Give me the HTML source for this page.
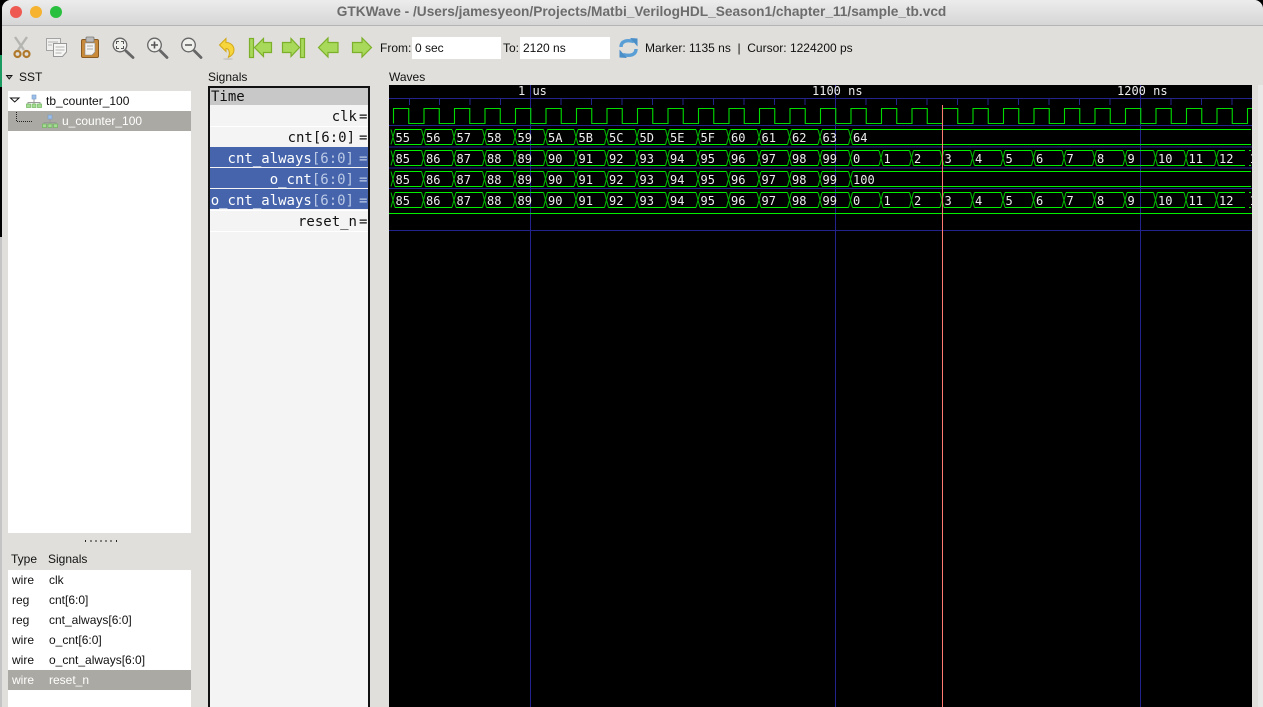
<!DOCTYPE html>
<html><head><meta charset="utf-8"><title>GTKWave</title>
<style>
html,body{margin:0;padding:0;background:#000;width:1263px;height:707px;overflow:hidden;}
body{position:relative;font-family:"Liberation Sans",sans-serif;}
#win{position:absolute;left:2px;top:0;width:1261px;height:707px;background:#e0dfdb;border-radius:9px 9px 0 0;overflow:hidden;}
.a{position:absolute;white-space:pre;}
.t{font-size:12px;line-height:14px;color:#111;}
.m{font-family:"DejaVu Sans Mono",monospace;font-size:14px;line-height:18px;color:#111;text-align:right;}
.e{left:359px;}
.s{color:#fff;}.s i{font-style:normal;color:#bccae6;}
.r{position:absolute;left:210px;width:158px;}
text{font-family:"DejaVu Sans Mono",monospace;font-size:12px;fill:#eee;}
</style></head><body>
<div class="a" style="left:0;top:55px;width:2px;height:32px;background:#1a9a60"></div>
<div class="a" style="left:0;top:237px;width:2px;height:470px;background:#c4c4c4"></div>
<div id="win"></div>
<div class="a" style="left:2px;top:0;width:1261px;height:25px;background:linear-gradient(#ececec,#d6d6d6);border-bottom:1px solid #b4b4b4;border-radius:9px 9px 0 0"></div>
<div class="a" style="left:10px;top:6px;width:12px;height:12px;border-radius:50%;background:#ee5a52"></div>
<div class="a" style="left:30px;top:6px;width:12px;height:12px;border-radius:50%;background:#f5b32f"></div>
<div class="a" style="left:50px;top:6px;width:12px;height:12px;border-radius:50%;background:#2ac03f"></div>
<div class="a" style="left:0;width:1283px;top:4px;text-align:center;font-size:13.7px;line-height:16px;font-weight:bold;color:#6c6c6c">GTKWave - /Users/jamesyeon/Projects/Matbi_VerilogHDL_Season1/chapter_11/sample_tb.vcd</div>

<svg class="a" style="left:0;top:30px" width="640" height="34" viewBox="0 30 640 34">
<!-- scissors -->
<g fill="none">
<path d="M15 37L24 50M27 37L18 50" stroke="#b4b4b0" stroke-width="2.400"/>
<circle cx="17.500" cy="54" r="3" stroke="#b0782a" stroke-width="2.200"/><circle cx="26.500" cy="54" r="3" stroke="#b0782a" stroke-width="2.200"/>
</g>
<!-- copy -->
<path d="M46.500 38.500H60.500V50.500H46.500Z" fill="#f0f0ee" stroke="#a4a4a4"/>
<path d="M53.500 43.500H66.500V52L62.500 56.500H53.500Z" fill="#f6f6f4" stroke="#989898"/>
<path d="M48 42h10M48 45h4M55.500 47h9M55.500 50h9M55.500 53h6" stroke="#b4b4b4"/>
<!-- paste -->
<rect x="81.500" y="39.500" width="17" height="18" rx="1.500" fill="#c98a3a" stroke="#8a5a20"/>
<path d="M85 43H95V52L92 55H85Z" fill="#f2f2f0" stroke="#888" stroke-width=".6"/>
<rect x="86" y="37" width="8" height="5" rx="1" fill="#bbb" stroke="#777" stroke-width=".8"/>
<path d="M87 46h6M87 49h6" stroke="#aaa"/>
<!-- zooms -->
<g fill="#efefec" stroke="#666" stroke-width="1.300">
<circle cx="120" cy="45" r="6.800"/><circle cx="154.500" cy="45" r="6.800"/><circle cx="188.500" cy="45" r="6.800"/></g>
<g stroke="#666" stroke-width="2.800" stroke-linecap="round">
<path d="M126 51L133 57.500M160.500 51L167 57.500M194.500 51L201 57.500"/></g>
<path d="M116.500 44v-2.500h2.500M121 41.500h2.500v2.500M123.500 46v2.500h-2.500M119 48.500h-2.500v-2.500" fill="none" stroke="#555"/>
<path d="M151 45h7M154.500 41.500v7M185 45h7" stroke="#555" stroke-width="1.600"/>
<!-- undo -->
<path d="M219.500 45L226 38.500V42.500C231 42.500 234 46 234 50C234 53.500 231.500 56 228 57.500C230 55 230 48.500 226 48.500V51.500Z" fill="#f6d63c" stroke="#d2a818"/>
<ellipse cx="228" cy="59" rx="5" ry="1" fill="#c9c8c4"/>
<!-- arrows -->
<g fill="#a8d95a" stroke="#7cb02a" stroke-width="1.200">
<rect x="249.500" y="38.500" width="4" height="19"/>
<path d="M254.500 47.500L263.500 38.500V42.500H271.500V52.500H263.500V56.500Z"/>
<rect x="300.500" y="38.500" width="4" height="19"/>
<path d="M299.500 47.500L291 38.500V42.500H282.500V52.500H291V56.500Z"/>
<path d="M318.500 47.500L328 38V42.500H338V52.500H328V57Z"/>
<path d="M371.500 47.500L362 38V42.500H352.500V52.500H362V57Z"/>
</g>
<!-- refresh -->
<g fill="none" stroke="#5a9ed6" stroke-width="3.400">
<path d="M621 47C621 41 627 39.500 634 41.500"/><path d="M636 49C636 55 630 56.500 623 54.500"/></g>
<path d="M630 38L637.500 38.500V46.500ZM627 58L619.500 57.500V49.500Z" fill="#4a8ec8"/>
</svg>

<div class="a t" style="left:380px;top:41px">From:</div>
<div class="a t" style="left:412px;top:37px;width:86px;height:22px;line-height:22px;background:#fff;padding-left:3px">0 sec</div>
<div class="a t" style="left:503px;top:41px">To:</div>
<div class="a t" style="left:520px;top:37px;width:87px;height:22px;line-height:22px;background:#fff;padding-left:3px">2120 ns</div>
<div class="a t" style="left:645px;top:41px">Marker: 1135 ns  |  Cursor: 1224200 ps</div>

<div class="a t" style="left:19px;top:70px">SST</div>
<div class="a t" style="left:208px;top:70px">Signals</div>
<div class="a t" style="left:389px;top:70px">Waves</div>
<svg class="a" style="left:0;top:70px" width="30" height="40" viewBox="0 70 30 40">
<path d="M6.500 75.500H12L9.200 79Z" fill="#999" stroke="#111" stroke-width=".9"/>
</svg>

<!-- SST tree -->
<div class="a" style="left:8px;top:91px;width:183px;height:442px;background:#fff"></div>
<div class="a" style="left:8px;top:111px;width:183px;height:20px;background:#aaa9a3"></div>
<div class="a t" style="left:46px;top:94px">tb_counter_100</div>
<div class="a t" style="left:62px;top:114px;color:#fff">u_counter_100</div>
<svg class="a" style="left:8px;top:91px" width="60" height="40" viewBox="8 91 60 40">
<path d="M10.500 98H19L14.700 102Z" fill="#fff" stroke="#111"/>
<path d="M16.500 112V121.500H33" fill="none" stroke="#222" stroke-dasharray="1 1"/>
<g id="h"><path d="M34 99v3M28 105v-2.500h12V105M34 102.500V105" fill="none" stroke="#999"/>
<rect x="32" y="95" width="4" height="4" fill="#9cc0ea" stroke="#7a9cc8" stroke-width=".6"/>
<g fill="#a4dc94" stroke="#6eb45c" stroke-width=".7"><rect x="26.500" y="104" width="4" height="3.500"/><rect x="32" y="104" width="4" height="3.500"/><rect x="37.500" y="104" width="4" height="3.500"/></g></g>
<use href="#h" x="16" y="20"/>
</svg>

<!-- splitter -->
<svg class="a" style="left:80px;top:537px" width="45" height="8"><path d="M5.500 3v2M11 3v2M16 3v2M21 3v2M26 3v2M31 3v2M36.500 3v2" stroke="#222"/></svg>

<!-- bottom list -->
<div class="a t" style="left:11px;top:552px">Type</div>
<div class="a t" style="left:48px;top:552px">Signals</div>
<div class="a" style="left:8px;top:570px;width:183px;height:137px;background:#fff"></div>
<div class="a" style="left:8px;top:670px;width:183px;height:20px;background:#aaa9a3"></div>
<div class="a t" style="left:12px;top:573px">wire</div><div class="a t" style="left:49px;top:573px">clk</div>
<div class="a t" style="left:12px;top:593px">reg</div><div class="a t" style="left:49px;top:593px">cnt[6:0]</div>
<div class="a t" style="left:12px;top:613px">reg</div><div class="a t" style="left:49px;top:613px">cnt_always[6:0]</div>
<div class="a t" style="left:12px;top:633px">wire</div><div class="a t" style="left:49px;top:633px">o_cnt[6:0]</div>
<div class="a t" style="left:12px;top:653px">wire</div><div class="a t" style="left:49px;top:653px">o_cnt_always[6:0]</div>
<div class="a t" style="left:12px;top:673px;color:#fff">wire</div><div class="a t" style="left:49px;top:673px;color:#fff">reset_n</div>

<!-- signal pane -->
<div class="a" style="left:208px;top:86px;width:158px;height:619px;background:#f4f4f4;border:solid #111;border-width:2px 2px 0 2px"></div>
<div class="r" style="top:88px;height:17px;background:#c8c8c8"></div>
<div class="r" style="top:126px;height:1px;background:#fff"></div>
<div class="r" style="top:147px;height:20px;background:#4564ab"></div>
<div class="r" style="top:168px;height:20px;background:#4564ab"></div>
<div class="r" style="top:189px;height:20px;background:#4564ab"></div>
<div class="r" style="top:210px;height:1px;background:#fff"></div>
<div class="r" style="top:231px;height:1px;background:#fff"></div>
<div class="a m" style="left:211px;top:88px;text-align:left">Time</div>
<div class="a m" style="right:906px;top:108px">clk</div><div class="a m e" style="top:108px">=</div>
<div class="a m" style="right:908px;top:129px">cnt[6:0]</div><div class="a m e" style="top:129px">=</div>
<div class="a m s" style="right:909px;top:150px">cnt_always<i>[6:0]</i></div><div class="a m s e" style="top:150px"><i>=</i></div>
<div class="a m s" style="right:909px;top:171px">o_cnt<i>[6:0]</i></div><div class="a m s e" style="top:171px"><i>=</i></div>
<div class="a m s" style="right:909px;top:192px">o_cnt_always<i>[6:0]</i></div><div class="a m s e" style="top:192px"><i>=</i></div>
<div class="a m" style="right:906px;top:213px">reset_n</div><div class="a m e" style="top:213px">=</div>

<div class="a" style="left:1258px;top:85px;width:5px;height:622px;background:#e9e9e7"></div>

<!-- waves -->
<svg class="a" style="left:389px;top:85px;background:#000" width="863" height="622" viewBox="389 85 863 622">
<g stroke="#23238c" fill="none">
<path d="M389 98.500H1252M389 125.500H1252M389 147H1252M389 168H1252M389 188.500H1252M389 230.500H1252"/>
<path d="M530.500 85V707M835.500 85V707M1140.500 85V707"/>
<path d="M409.500 99v6M439.500 99v6M470 99v6M500.500 99v6M561 99v6M591.500 99v6M622 99v6M652.500 99v6M683 99v6M713.500 99v6M744 99v6M774.500 99v6M805 99v6M866 99v6M896.500 99v6M927 99v6M957.500 99v6M988 99v6M1018.500 99v6M1049 99v6M1079.500 99v6M1110 99v6M1171 99v6M1201.500 99v6M1232 99v6"/>
</g>
<text x="518" y="95">1 us</text><text x="812" y="95">1100 ns</text><text x="1117" y="95">1200 ns</text>

<!-- clk -->
<path fill="none" stroke="#00dc00" stroke-width="1.100" d="M393.500 123.500v-15h15.250v15h15.250v-15h15.250v15h15.250v-15h15.250v15h15.250v-15h15.250v15h15.250v-15h15.250v15h15.250v-15h15.250v15h15.250v-15h15.250v15h15.250v-15h15.250v15h15.250v-15h15.250v15h15.250v-15h15.250v15h15.250v-15h15.250v15h15.250v-15h15.250v15h15.250v-15h15.250v15h15.250v-15h15.250v15h15.250v-15h15.250v15h15.250v-15h15.250v15h15.250v-15h15.250v15h15.250v-15h15.250v15h15.250v-15h15.250v15h15.250v-15h15.250v15h15.250v-15h15.250v15h15.250v-15h15.250v15h15.250v-15h15.250v15h15.250v-15h15.250v15h15.250v-15h15.250v15h15.250v-15h15.250v15h15.250v-15h15.250v15h15.250v-15h15.250v15h15.250v-15h15.250v15h15.250v-15h15.250v15h15.250v-15h15.250v15h15.250v-15h15.250v15h15.250v-15h15.250v15h15.250v-15h15.250v15h15.250"/>

<defs>
<path id="xa" fill="none" stroke="#00b000" stroke-width="1.100" d="M391 0l4 15m-4 0l4-15m26.500 0l4 15m-4 0l4-15m26.500 0l4 15m-4 0l4-15m26.500 0l4 15m-4 0l4-15m26.500 0l4 15m-4 0l4-15m26.500 0l4 15m-4 0l4-15m26.500 0l4 15m-4 0l4-15m26.500 0l4 15m-4 0l4-15m26.500 0l4 15m-4 0l4-15m26.500 0l4 15m-4 0l4-15m26.500 0l4 15m-4 0l4-15m26.500 0l4 15m-4 0l4-15m26.500 0l4 15m-4 0l4-15m26.500 0l4 15m-4 0l4-15m26.500 0l4 15m-4 0l4-15m26.500 0l4 15m-4 0l4-15"/>
<path id="xb" fill="none" stroke="#00b000" stroke-width="1.100" d="M879 0l4 15m-4 0l4-15m26.500 0l4 15m-4 0l4-15m26.500 0l4 15m-4 0l4-15m26.500 0l4 15m-4 0l4-15m26.500 0l4 15m-4 0l4-15m26.500 0l4 15m-4 0l4-15m26.500 0l4 15m-4 0l4-15m26.500 0l4 15m-4 0l4-15m26.500 0l4 15m-4 0l4-15m26.500 0l4 15m-4 0l4-15m26.500 0l4 15m-4 0l4-15m26.500 0l4 15m-4 0l4-15"/>
</defs>
<use href="#xa" y="129.500"/><use href="#xa" y="150.500"/><use href="#xa" y="171.500"/><use href="#xa" y="192.500"/>
<use href="#xb" y="150.500"/><use href="#xb" y="192.500"/>
<g stroke="#00f000" stroke-width="1.100" fill="none">
<path stroke-dasharray="26.500 4" d="M395 150.500H1251"/><path stroke-dasharray="26.500 4" d="M395 165.500H1251"/><path stroke-dasharray="26.500 4" d="M395 192.500H1251"/><path stroke-dasharray="26.500 4" d="M395 207.500H1251"/>
<path stroke-dasharray="26.500 4" d="M395 129.500H848.500"/><path stroke-dasharray="26.500 4" d="M395 144.500H848.500"/><path stroke-dasharray="26.500 4" d="M395 171.500H848.500"/><path stroke-dasharray="26.500 4" d="M395 186.500H848.500"/>
<path d="M852.500 129.500H1251M852.500 144.500H1251M852.500 171.500H1251M852.500 186.500H1251M389 213.500H1252"/>
</g>

<!-- cnt -->
<text x="395.500" y="142">55</text><text x="426" y="142">56</text><text x="456.500" y="142">57</text><text x="487" y="142">58</text><text x="517.500" y="142">59</text><text x="548" y="142">5A</text><text x="578.500" y="142">5B</text><text x="609" y="142">5C</text><text x="639.500" y="142">5D</text><text x="670" y="142">5E</text><text x="700.500" y="142">5F</text><text x="731" y="142">60</text><text x="761.500" y="142">61</text><text x="792" y="142">62</text><text x="822.500" y="142">63</text><text x="853" y="142">64</text>
<!-- cnt_always -->
<text x="395.500" y="163">85</text><text x="426" y="163">86</text><text x="456.500" y="163">87</text><text x="487" y="163">88</text><text x="517.500" y="163">89</text><text x="548" y="163">90</text><text x="578.500" y="163">91</text><text x="609" y="163">92</text><text x="639.500" y="163">93</text><text x="670" y="163">94</text><text x="700.500" y="163">95</text><text x="731" y="163">96</text><text x="761.500" y="163">97</text><text x="792" y="163">98</text><text x="822.500" y="163">99</text><text x="853" y="163">0</text><text x="883.500" y="163">1</text><text x="914" y="163">2</text><text x="944.500" y="163">3</text><text x="975" y="163">4</text><text x="1005.500" y="163">5</text><text x="1036" y="163">6</text><text x="1066.500" y="163">7</text><text x="1097" y="163">8</text><text x="1127.500" y="163">9</text><text x="1158" y="163">10</text><text x="1188.500" y="163">11</text><text x="1219" y="163">12</text><text x="1249.500" y="163">13</text>
<!-- o_cnt -->
<text x="395.500" y="184">85</text><text x="426" y="184">86</text><text x="456.500" y="184">87</text><text x="487" y="184">88</text><text x="517.500" y="184">89</text><text x="548" y="184">90</text><text x="578.500" y="184">91</text><text x="609" y="184">92</text><text x="639.500" y="184">93</text><text x="670" y="184">94</text><text x="700.500" y="184">95</text><text x="731" y="184">96</text><text x="761.500" y="184">97</text><text x="792" y="184">98</text><text x="822.500" y="184">99</text><text x="853" y="184">100</text>
<!-- o_cnt_always -->
<text x="395.500" y="205">85</text><text x="426" y="205">86</text><text x="456.500" y="205">87</text><text x="487" y="205">88</text><text x="517.500" y="205">89</text><text x="548" y="205">90</text><text x="578.500" y="205">91</text><text x="609" y="205">92</text><text x="639.500" y="205">93</text><text x="670" y="205">94</text><text x="700.500" y="205">95</text><text x="731" y="205">96</text><text x="761.500" y="205">97</text><text x="792" y="205">98</text><text x="822.500" y="205">99</text><text x="853" y="205">0</text><text x="883.500" y="205">1</text><text x="914" y="205">2</text><text x="944.500" y="205">3</text><text x="975" y="205">4</text><text x="1005.500" y="205">5</text><text x="1036" y="205">6</text><text x="1066.500" y="205">7</text><text x="1097" y="205">8</text><text x="1127.500" y="205">9</text><text x="1158" y="205">10</text><text x="1188.500" y="205">11</text><text x="1219" y="205">12</text><text x="1249.500" y="205">13</text>

<path d="M942.500 105V707" stroke="#ff7a70" fill="none"/>
</svg>
</body></html>
